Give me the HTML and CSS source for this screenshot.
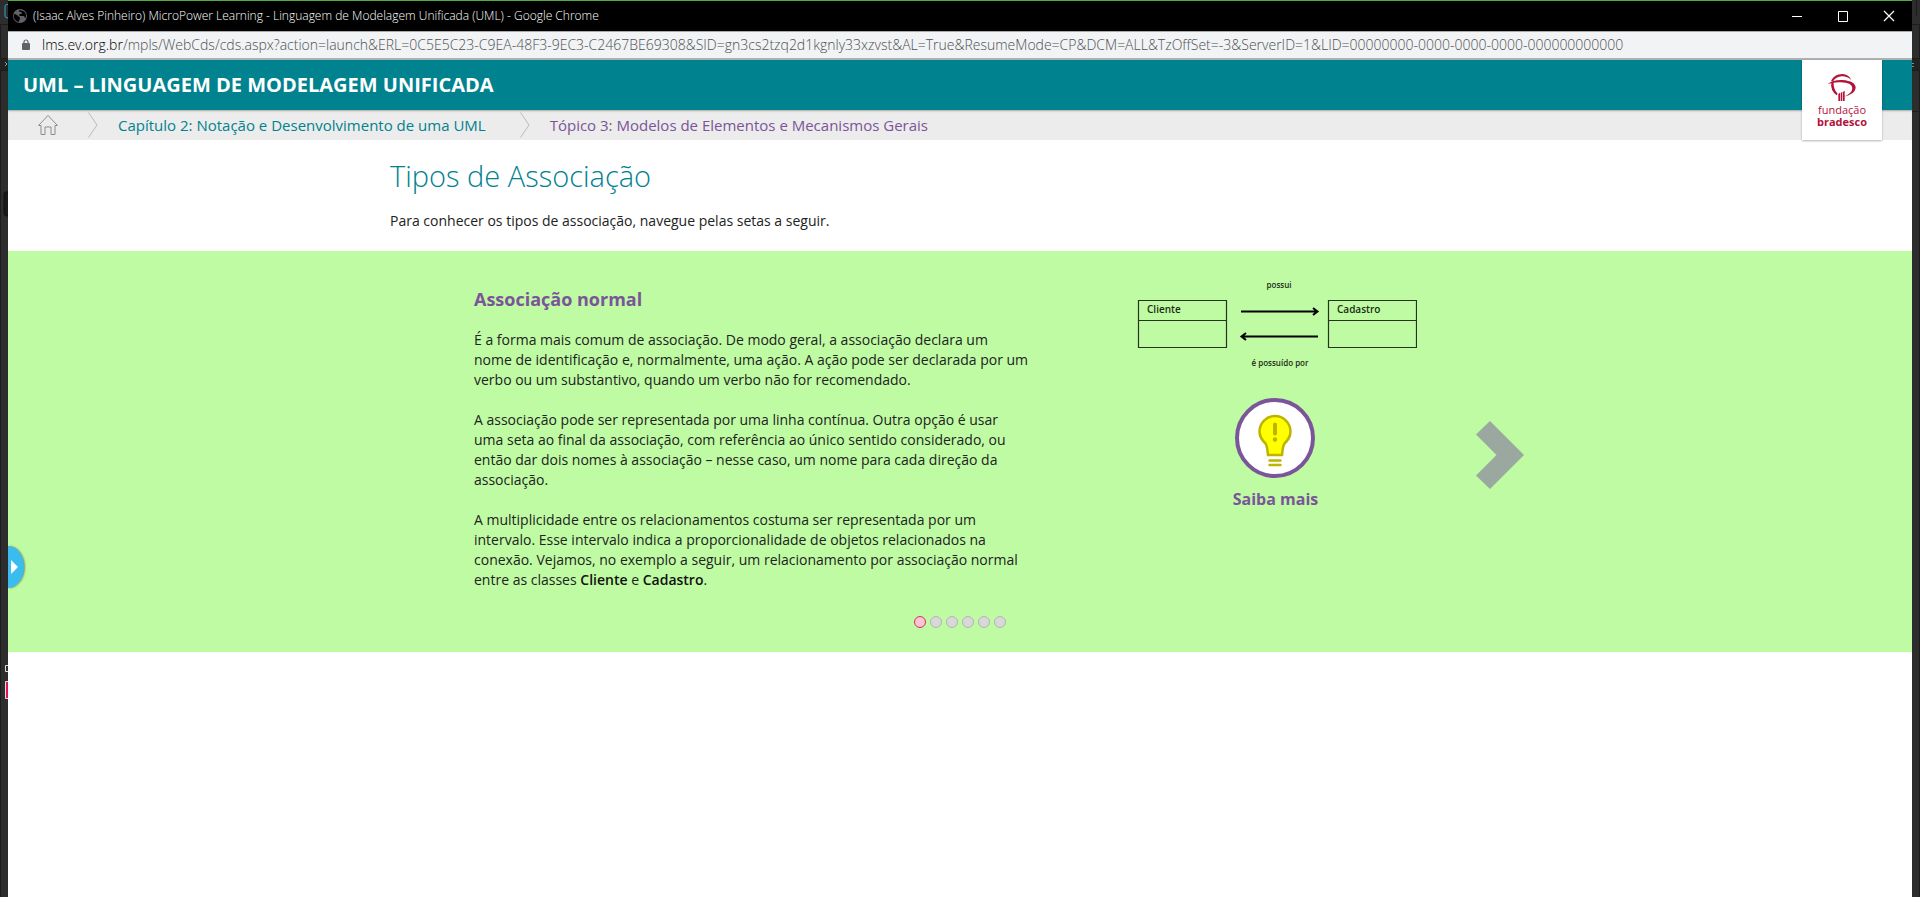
FILE: index.html
```html
<!DOCTYPE html>
<html lang="pt-BR">
<head>
<meta charset="utf-8">
<title>MicroPower Learning - Linguagem de Modelagem Unificada (UML)</title>
<link rel="stylesheet" href="styles.css">
</head>
<body>
<div class="desktop">
  <svg class="edge" width="8" height="897" aria-hidden="true">
    <path d="M0 24.500H8M0 58.500H8M0 70.500H8M.5 24V897" stroke="#1c1c1c"/>
    <path d="M0 59h8v11H0z" fill="#222"/>
    <path d="M8 4.500H6.500Q5 4.500 5 7v9q0 2 3 2" fill="none" stroke="#2ea3d8"/>
    <path d="M8 192H5.500Q4 192 4 194v20q0 2 4 2" fill="#191919" stroke="#111"/>
    <path d="M5 62l2 2-2 2" fill="none" stroke="#999"/>
    <path d="M8 665.500H5.500v6H8M8 681.500H5.500v17H8" fill="none" stroke="#ddd"/>
    <path d="M6 682h2v16H6z" fill="#e0115f"/>
  </svg>

  <div class="window">
    <header class="titlebar">
      <svg class="globe" viewBox="0 0 16 16" width="16" height="16" aria-hidden="true">
        <circle cx="8" cy="8" r="7" fill="#5f6368"/>
        <path d="M2 6c2 0 3 1 4 2s2 1 2 2-1 2-1 4C3 13 1 10 2 6zM7 2c0 2 1 2 2 2s1 2 0 2-2 0-2 1 2 1 4 1 2 2 2 3c2-3 1-7-2-8z" fill="#000"/>
      </svg>
      <span class="window-title">(Isaac Alves Pinheiro) MicroPower Learning - Linguagem de Modelagem Unificada (UML) - Google Chrome</span>
      <div class="controls">
        <button type="button" aria-label="Minimizar"><svg width="12" height="12" viewBox="0 0 12 12"><path d="M1 6.500h10" stroke="#fff"/></svg></button>
        <button type="button" aria-label="Maximizar"><svg width="12" height="12" viewBox="0 0 12 12"><path d="M1.500 1.500h9v10h-9z" fill="none" stroke="#fff"/></svg></button>
        <button type="button" aria-label="Fechar"><svg width="12" height="12" viewBox="0 0 12 12"><path d="M1 1l10 10M11 1L1 11" stroke="#fff" stroke-width="1.200"/></svg></button>
      </div>
    </header>

    <div class="address">
      <svg width="8" height="12" viewBox="0 0 8 12" aria-hidden="true">
        <path d="M2 5V3a2 2 0 0 1 4 0v2" fill="none" stroke="#5f6368" stroke-width="1.200"/>
        <rect y="4" width="8" height="7" rx="1" fill="#5f6368"/>
      </svg>
      <span class="url"><span class="host">lms.ev.org.br</span>/mpls/WebCds/cds.aspx?action=launch&amp;ERL=0C5E5C23-C9EA-48F3-9EC3-C2467BE69308&amp;SID=gn3cs2tzq2d1kgnly33xzvst&amp;AL=True&amp;ResumeMode=CP&amp;DCM=ALL&amp;TzOffSet=-3&amp;ServerID=1&amp;LID=00000000-0000-0000-0000-000000000000</span>
    </div>

    <div class="page">
      <div class="course-bar"><span>UML – LINGUAGEM DE MODELAGEM UNIFICADA</span></div>
      <nav class="breadcrumb" aria-label="Navegação">
        <a class="home" href="#" aria-label="Início">
          <svg width="20" height="24" viewBox="0 0 20 24"><path d="M.5 12.500L10 2.500l9.500 10h-2.500V21.500h-4V14H7v7.500H3V12.500z" fill="none" stroke="#8c8c8c"/></svg>
        </a>
        <svg class="sep" width="10" height="26" viewBox="0 0 10 26" aria-hidden="true"><path d="M.5.500l8.500 12.500-8.500 12.500" fill="none" stroke="#bbb"/></svg>
        <a class="chapter" href="#">Capítulo 2: Notação e Desenvolvimento de uma UML</a>
        <svg class="sep" width="10" height="26" viewBox="0 0 10 26" aria-hidden="true"><path d="M.5.500l8.500 12.500-8.500 12.500" fill="none" stroke="#bbb"/></svg>
        <a class="topic" href="#">Tópico 3: Modelos de Elementos e Mecanismos Gerais</a>
      </nav>

      <div class="brand">
        <svg width="30" height="28" viewBox="0 0 90 84" aria-hidden="true">
          <g fill="#b3123a">
            <path d="M12 24Q22 3 46 3q20 1 27 18Q60 9 44 10 27 11 18 25z"/>
            <path d="M2 33Q18 20 46 21q40 3 40 24-2 19-36 26 26-10 26-26Q74 29 42 28 20 27 2 33z"/>
            <path d="M13 26Q9 52 29 67l3-5Q18 48 20 26z"/>
            <path d="M34 63l5-4v25h-5zM41 60l5-4v28h-5zM48 57l5-4v31h-5z"/>
          </g>
        </svg>
        <span>fundação</span>
        <strong>bradesco</strong>
      </div>

      <main>
        <section class="intro">
          <h1>Tipos de Associação</h1>
          <p>Para conhecer os tipos de associação, navegue pelas setas a seguir.</p>
        </section>

        <section class="slider">
          <div class="slide">
            <article>
              <h2>Associação normal</h2>
              <p>É a forma mais comum de associação. De modo geral, a associação declara um nome de identificação e, normalmente, uma ação. A ação pode ser declarada por um verbo ou um substantivo, quando um verbo não for recomendado.</p>
              <p>A associação pode ser representada por uma linha contínua. Outra opção é usar uma seta ao final da associação, com referência ao único sentido considerado, ou então dar dois nomes à associação – nesse caso, um nome para cada direção da associação.</p>
              <p>A multiplicidade entre os relacionamentos costuma ser representada por um intervalo. Esse intervalo indica a proporcionalidade de objetos relacionados na conexão. Vejamos, no exemplo a seguir, um relacionamento por associação normal entre as classes <b>Cliente</b> e <b>Cadastro</b>.</p>
            </article>
            <aside>
              <svg class="diagram" width="283" height="96" viewBox="-4 0 283 96" role="img" aria-label="Cliente possui Cadastro">
                <g fill="none" stroke="#26331f" stroke-width="1.200">
                  <path d="M.500 23.500h88v47H.500zM.500 43.500h88M190.500 23.500h88v47h-88zM190.500 43.500h88"/>
                </g>
                <g fill="none" stroke="#000" stroke-width="2">
                  <path d="M103 34.500h76M104 59.500h76M175 31l4.500 3.500L175 38M108 56l-4.500 3.500L108 63"/>
                </g>
                <text x="9" y="36" class="entity">Cliente</text>
                <text x="199" y="36" class="entity">Cadastro</text>
                <text x="141" y="11" class="relation">possui</text>
                <text x="142" y="89" class="relation">é possuído por</text>
              </svg>
              <button type="button" class="more">
                <svg width="80" height="80" viewBox="0 0 80 80" aria-hidden="true">
                  <circle cx="40" cy="40" r="38" fill="#fff" stroke="#7a5599" stroke-width="4"/>
                  <path d="M40 18a15.500 15.500 0 0 0-15.500 15.500c0 6 3 9 6 12 1.500 2 2 6 2.500 11.500h14c.5-5.500 1-9.500 2.500-11.500 3-3 6-6 6-12A15.500 15.500 0 0 0 40 18z" fill="#ff0" stroke="#bcb400" stroke-width="2.500"/>
                  <path d="M40 26.500v9" stroke="#bcb400" stroke-width="4" stroke-linecap="round"/>
                  <circle cx="40" cy="41.500" r="2.200" fill="#bcb400"/>
                  <path d="M34.500 62.500h11M34.500 67h11" stroke="#bcb400" stroke-width="2.400" stroke-linecap="round"/>
                </svg>
                <span>Saiba mais</span>
              </button>
            </aside>
            <button type="button" class="next" aria-label="Próximo">
              <svg width="48" height="68" viewBox="0 0 48 68"><path d="M14 0l34 34-34 34L0 54.500 20.500 34 0 13.500z" fill="#9ba8a0"/></svg>
            </button>
          </div>
          <div class="dots">
            <button type="button" class="active" aria-label="1"></button>
            <button type="button" aria-label="2"></button>
            <button type="button" aria-label="3"></button>
            <button type="button" aria-label="4"></button>
            <button type="button" aria-label="5"></button>
            <button type="button" aria-label="6"></button>
          </div>
        </section>
      </main>
    </div>
    <button type="button" class="drawer" aria-label="Abrir menu">
      <svg width="7" height="14" viewBox="0 0 7 14"><path d="M0 0l7 7-7 7z" fill="#fff"/></svg>
    </button>
  </div>

  <svg class="edge" width="8" height="897" aria-hidden="true">
    <path d="M0 24.500H7.500M0 58.500H8M0 70.500H8M0 111.500H8M7.500 24V897M4.500 0V16" stroke="#1c1c1c" fill="none"/>
    <path d="M0 59h8v11H0z" fill="#222"/>
    <path d="M0 63.500h2M0 66.500h2" stroke="#888"/>
  </svg>
</div>
</body>
</html>
```
FILE: styles.css
```css
* { box-sizing: border-box; }

body {
  margin: 0;
  font-family: "Open Sans", "Noto Sans", sans-serif;
  font-size: 14px;
  line-height: 20px;
  color: #222;
}

button {
  padding: 0;
  border: 0;
  background: none;
  font: inherit;
  cursor: pointer;
}

svg { display: block; flex: none; }
a { text-decoration: none; }
h1, h2, p { margin: 0; }

.desktop {
  display: flex;
  min-height: 100vh;
  background: #2d2d2d;
}

.edge { margin-bottom: -100px; }

.window {
  position: relative;
  flex: 1;
  min-width: 0;
  display: flex;
  flex-direction: column;
  background: #fff;
}

.titlebar {
  display: flex;
  align-items: center;
  height: 31px;
  padding-left: 4px;
  border-top: 1px solid #4caf3f;
  background: #000;
  color: #fff;
  font-size: 12px;
  font-weight: 300;
  white-space: nowrap;
}

.window-title { margin-left: 5px; }

.controls {
  display: flex;
  margin-left: auto;
}

.controls button {
  display: flex;
  align-items: center;
  justify-content: center;
  width: 46px;
  height: 30px;
}

.address {
  display: flex;
  align-items: center;
  height: 29px;
  padding-left: 14px;
  border-top: 1px solid #aaa;
  border-bottom: 2px solid #b0b0b0;
  background: #f1f3f4;
  color: #4c5054;
  font-weight: 300;
  white-space: nowrap;
  overflow: hidden;
}

.url { margin-left: 12px; }
.host { color: #000; }

.page { position: relative; }

.course-bar {
  display: flex;
  align-items: center;
  height: 50px;
  padding-left: 15px;
  background: #00828f;
  color: #fff;
  font-size: 20px;
  font-weight: 700;
}

.breadcrumb {
  display: flex;
  align-items: center;
  height: 30px;
  padding-left: 30px;
  background: #ececec;
  box-shadow: inset 0 2px 2px -1px #aaa;
  font-size: 15px;
}

.home { margin-right: 30px; }
.chapter { margin: 0 34px 0 20px; color: #00828f; }
.topic { margin-left: 20px; color: #7a5599; }

.brand {
  position: absolute;
  top: 0;
  right: 30px;
  display: flex;
  flex-direction: column;
  align-items: center;
  width: 80px;
  height: 80px;
  padding-top: 13px;
  background: #fff;
  box-shadow: 0 1px 2px rgba(0, 0, 0, 0.3);
  color: #b3123a;
  font-size: 11px;
  line-height: 12px;
}

.brand span { margin-top: 3px; }

.intro {
  max-width: 1140px;
  margin: 0 auto;
  padding: 18px 0 20px;
}

.intro h1 {
  color: #00828f;
  font-size: 29px;
  font-weight: 300;
  line-height: 36px;
}

.intro p { margin-top: 17px; }

.slider {
  padding: 32px 0 24px;
  background: #bffba3;
}

.slide {
  display: flex;
  max-width: 1140px;
  margin: 0 auto;
  padding: 0 6px 0 84px;
}

article { flex: 0 1 555px; }

article h2 {
  margin-bottom: 14px;
  color: #7a5599;
  font-size: 18px;
  font-weight: 700;
  line-height: 33px;
}

article p { margin-bottom: 20px; }
article b { font-weight: 600; color: #111; }

aside {
  display: flex;
  flex-direction: column;
  align-items: center;
  margin-left: 105px;
  margin-top: -6px;
}

.diagram text { fill: #1c2b16; font-weight: 600; }
.diagram .entity { font-size: 10px; }
.diagram .relation { font-size: 8px; text-anchor: middle; }

.more {
  display: flex;
  flex-direction: column;
  align-items: center;
  margin-top: 25px;
  color: #7a5599;
  font-size: 16px;
  font-weight: 700;
}

.more span { margin-top: 11px; }

.next {
  align-self: flex-start;
  margin: 138px 0 0 auto;
}

.dots {
  display: flex;
  justify-content: center;
  gap: 4px;
  margin-top: 6px;
}

.dots button {
  width: 12px;
  height: 12px;
  border: 1px solid #b5b5b5;
  border-radius: 50%;
  background: #d8d8d8;
}

.dots .active {
  border-color: #e0305f;
  background: #f9c6d6;
}

.drawer {
  position: absolute;
  left: 0;
  top: 546px;
  display: flex;
  align-items: center;
  width: 16px;
  height: 42px;
  padding-left: 3px;
  border-radius: 0 16px 16px 0 / 0 21px 21px 0;
  background: #3bbcf0;
  box-shadow: 1px 0 2px rgba(0, 0, 0, 0.4);
}
```
